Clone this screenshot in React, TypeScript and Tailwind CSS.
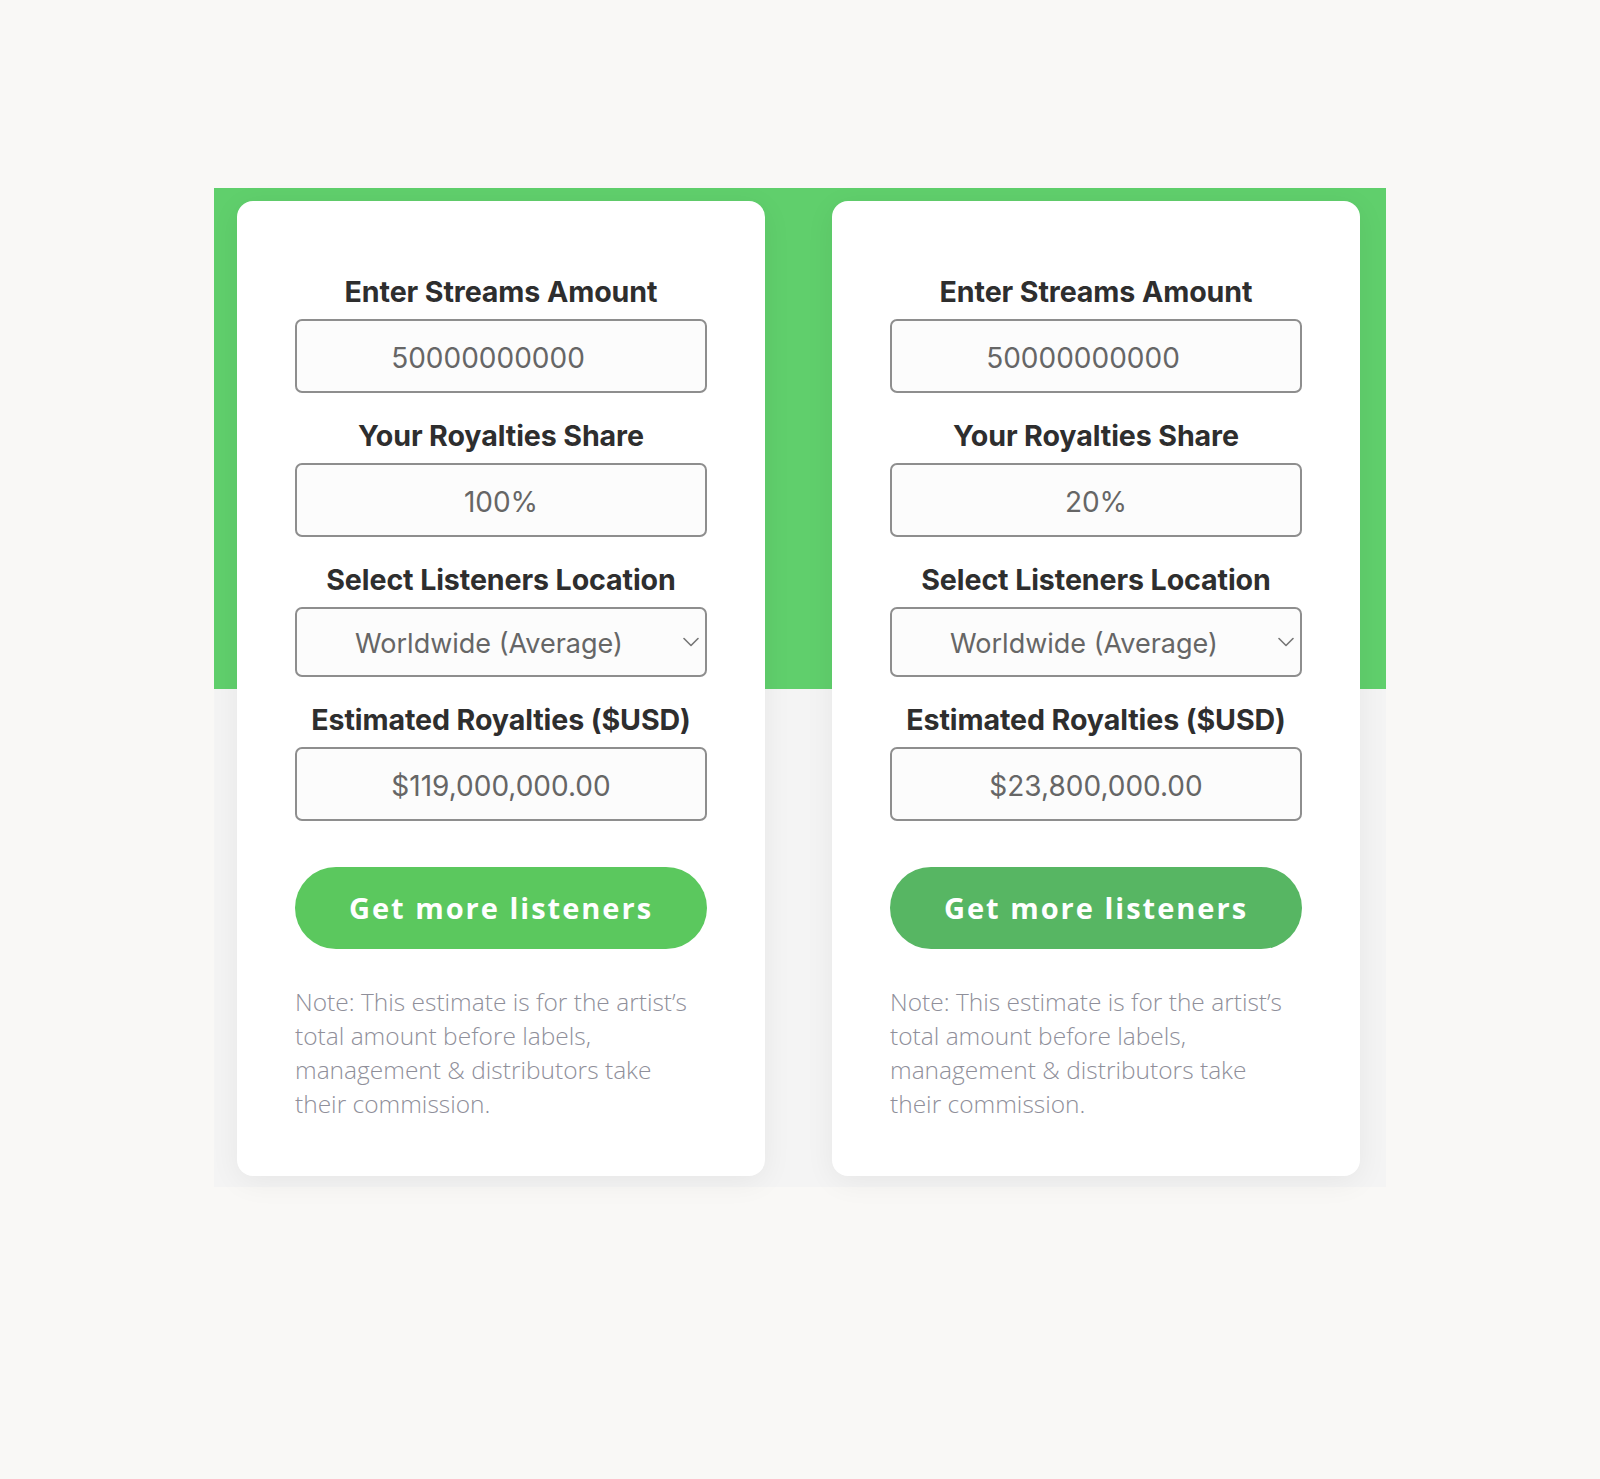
const LABEL = 'block text-center text-[28.6px] leading-[34px] font-bold text-[#2e2e2e] mb-[10px] font-["Inter",sans-serif] tracking-[-0.1px]';
const FIELD =
  'flex w-full items-center justify-center rounded-[7px] border-2 border-[#8e8e8e] bg-[#fcfcfc] pt-[4px] text-[#666666] font-["Inter",sans-serif]';

function Calculator({ share, total, buttonBg }: { share: string; total: string; buttonBg: string }) {
  return (
    <div className="w-[528px] rounded-[16px] bg-white px-[58px] pt-[74px] pb-[55px] shadow-[0_6px_30px_rgba(0,0,0,0.06)]">
      {/* Streams */}
      <label className={LABEL}>Enter Streams Amount</label>
      <div className={`${FIELD} h-[74px] pr-[26px] text-[28px]`}>50000000000</div>

      {/* Share */}
      <label className={`${LABEL} mt-[26px]`}>Your Royalties Share</label>
      <div className={`${FIELD} h-[74px] text-[28px]`}>{share}</div>

      {/* Location */}
      <label className={`${LABEL} mt-[26px]`}>Select Listeners Location</label>
      <div className={`${FIELD} relative h-[70px] pr-[24px] text-[27px]`}>
        Worldwide (Average)
        <svg className="absolute right-[6px] top-1/2 -translate-y-1/2" width="16" height="10" viewBox="0 0 16 10" fill="none">
          <path d="M1 1.5l7 7 7-7" stroke="#767676" strokeWidth="1.6" strokeLinecap="round" strokeLinejoin="round" />
        </svg>
      </div>

      {/* Result */}
      <label className={`${LABEL} mt-[26px]`}>Estimated Royalties ($USD)</label>
      <div className={`${FIELD} h-[74px] text-[28px]`}>{total}</div>

      <button
        type="button"
        className={`mt-[46px] flex h-[82px] w-full items-center justify-center rounded-full ${buttonBg} text-[29px] font-bold tracking-[2px] text-white font-["Open_Sans",sans-serif]`}
      >
        Get more listeners
      </button>

      <p className='mt-[36px] text-[24.5px] leading-[34px] text-[#8f8f9a] font-["Open_Sans",sans-serif] font-light'>
        Note: This estimate is for the artist’s
        <br />
        total amount before labels,
        <br />
        management &amp; distributors take
        <br />
        their commission.
      </p>
    </div>
  );
}

export default function App() {
  return (
    <div className="min-h-[1479px] w-full bg-[#f9f8f6] pt-[188px]">
      <div className="ml-[214px] flex w-[1172px] gap-[67px] bg-[linear-gradient(to_bottom,#60cf6c_0,#60cf6c_501px,#f4f4f4_501px)] pl-[23px] pr-[26px] pt-[13px] pb-[11px]">
        <Calculator share="100%" total="$119,000,000.00" buttonBg="bg-[#5bc85e]" />
        <Calculator share="20%" total="$23,800,000.00" buttonBg="bg-[#57b663]" />
      </div>
    </div>
  );
}
